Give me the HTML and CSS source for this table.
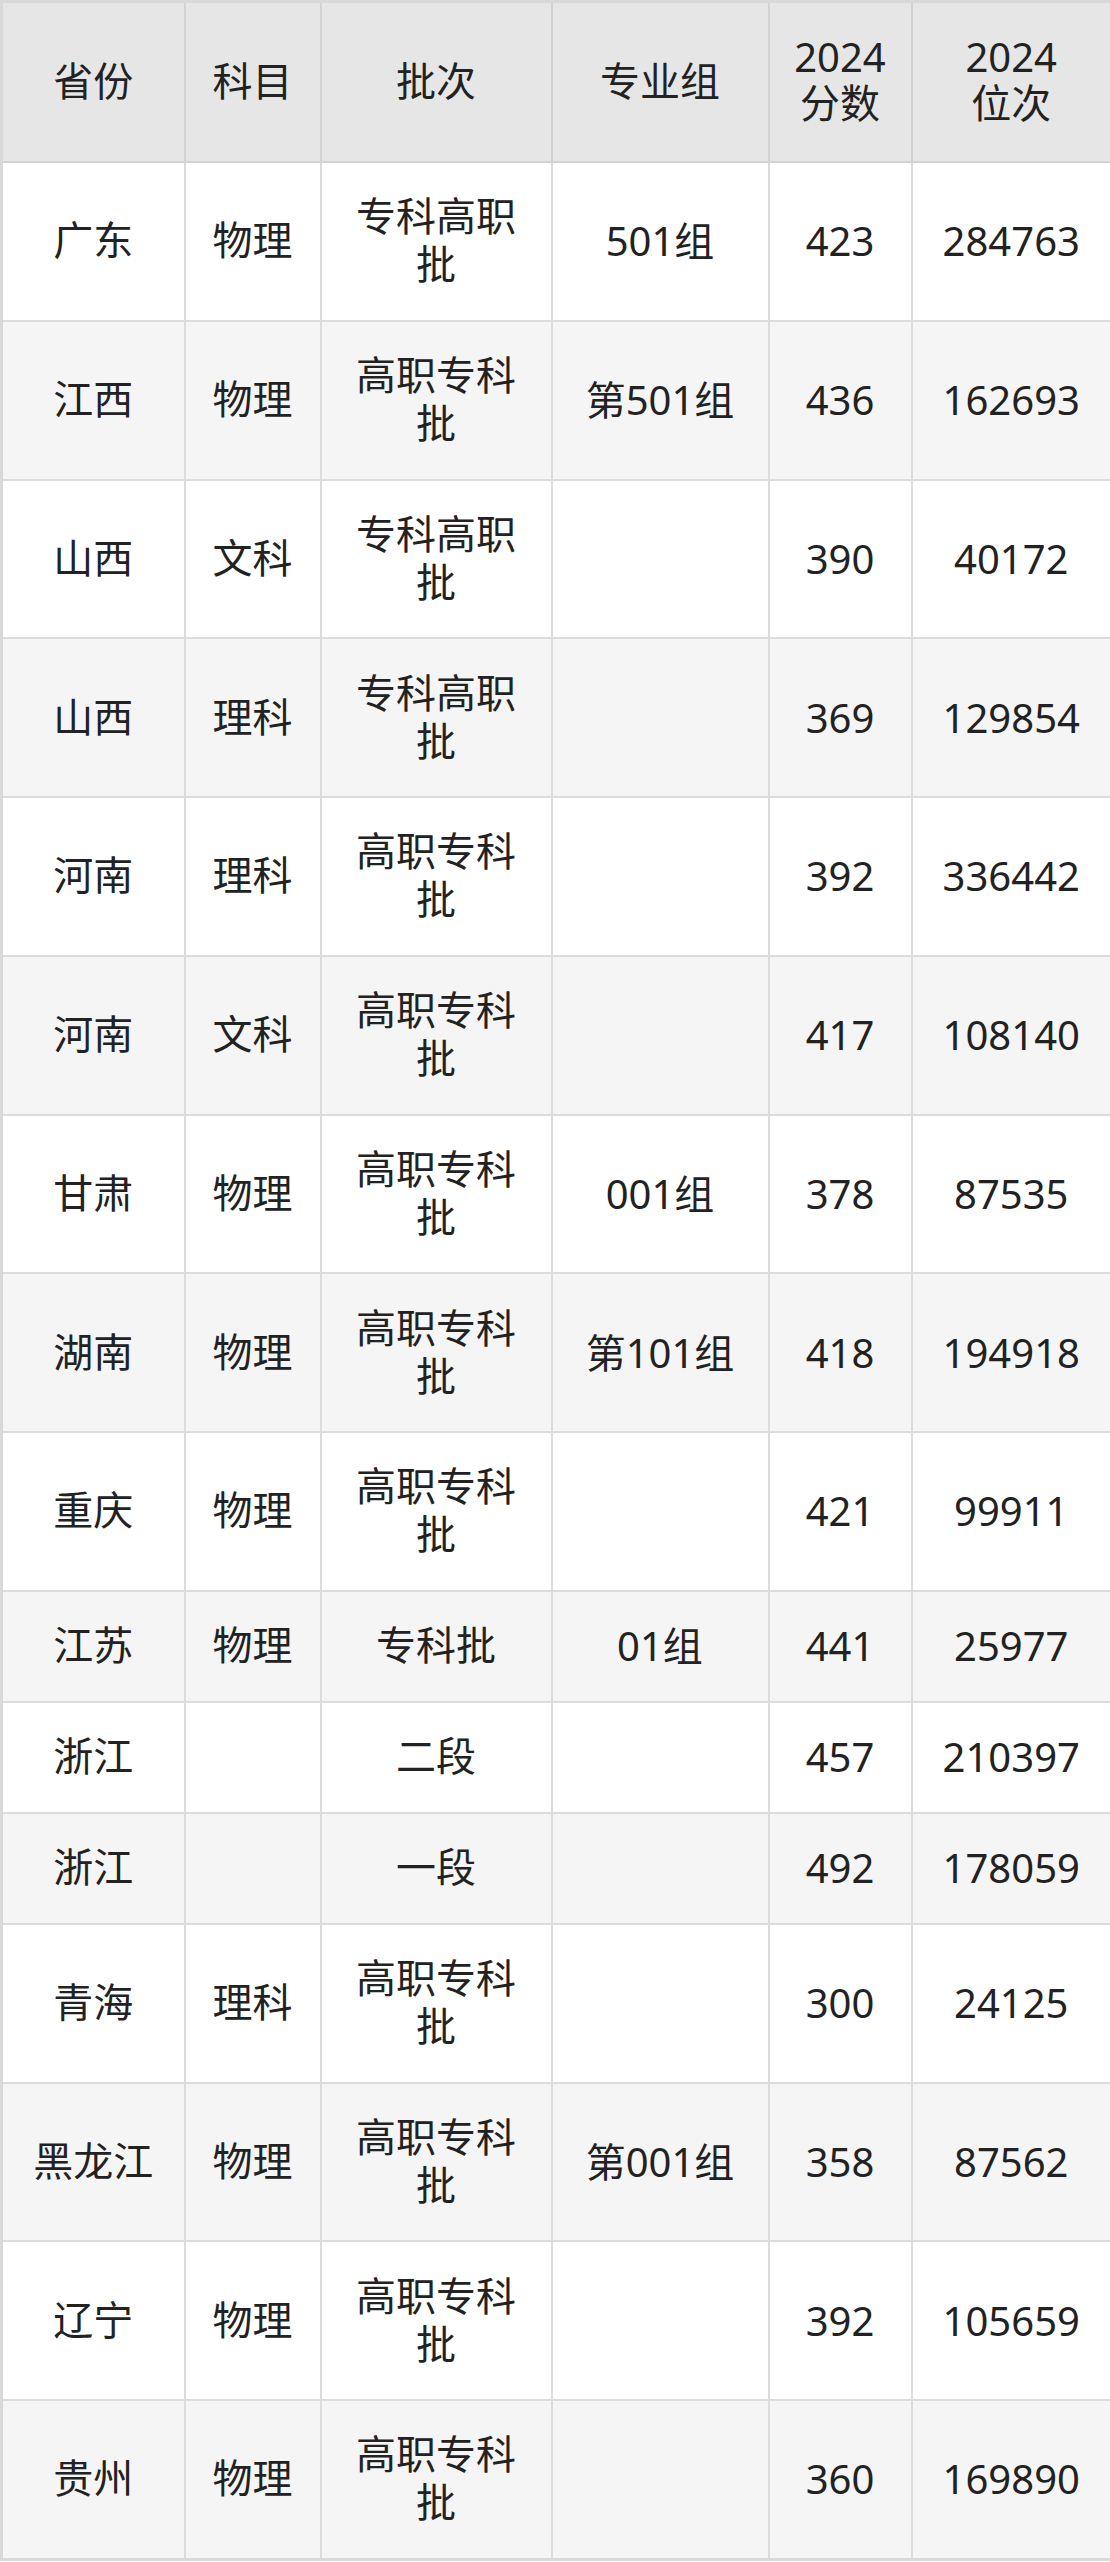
FILE: index.html
```html
<!DOCTYPE html>
<html lang="zh-CN">
<head>
<meta charset="utf-8">
<title>2024 分数位次</title>
<link rel="stylesheet" href="styles.css">
</head>
<body>
<table class="score-table">
  <colgroup>
    <col class="c-prov"><col class="c-subj"><col class="c-batch"><col class="c-group"><col class="c-score"><col class="c-rank">
  </colgroup>
  <thead>
    <tr class="head-row">
      <th class="cjk">省份</th><th class="cjk">科目</th><th class="cjk">批次</th><th class="cjk">专业组</th>
      <th><span class="line num">2024</span><span class="line cjk">分数</span></th>
      <th><span class="line num">2024</span><span class="line cjk">位次</span></th>
    </tr>
  </thead>
  <tbody>
    <tr class="tall"><td class="cjk">广东</td><td class="cjk">物理</td><td class="cjk">专科高职<br>批</td><td>501组</td><td>423</td><td>284763</td></tr>
    <tr class="tall alt"><td class="cjk">江西</td><td class="cjk">物理</td><td class="cjk">高职专科<br>批</td><td>第501组</td><td>436</td><td>162693</td></tr>
    <tr class="tall"><td class="cjk">山西</td><td class="cjk">文科</td><td class="cjk">专科高职<br>批</td><td></td><td>390</td><td>40172</td></tr>
    <tr class="tall alt"><td class="cjk">山西</td><td class="cjk">理科</td><td class="cjk">专科高职<br>批</td><td></td><td>369</td><td>129854</td></tr>
    <tr class="tall"><td class="cjk">河南</td><td class="cjk">理科</td><td class="cjk">高职专科<br>批</td><td></td><td>392</td><td>336442</td></tr>
    <tr class="tall alt"><td class="cjk">河南</td><td class="cjk">文科</td><td class="cjk">高职专科<br>批</td><td></td><td>417</td><td>108140</td></tr>
    <tr class="tall"><td class="cjk">甘肃</td><td class="cjk">物理</td><td class="cjk">高职专科<br>批</td><td>001组</td><td>378</td><td>87535</td></tr>
    <tr class="tall alt"><td class="cjk">湖南</td><td class="cjk">物理</td><td class="cjk">高职专科<br>批</td><td>第101组</td><td>418</td><td>194918</td></tr>
    <tr class="tall"><td class="cjk">重庆</td><td class="cjk">物理</td><td class="cjk">高职专科<br>批</td><td></td><td>421</td><td>99911</td></tr>
    <tr class="short alt"><td class="cjk">江苏</td><td class="cjk">物理</td><td class="cjk">专科批</td><td>01组</td><td>441</td><td>25977</td></tr>
    <tr class="short"><td class="cjk">浙江</td><td></td><td class="cjk">二段</td><td></td><td>457</td><td>210397</td></tr>
    <tr class="short alt"><td class="cjk">浙江</td><td></td><td class="cjk">一段</td><td></td><td>492</td><td>178059</td></tr>
    <tr class="tall"><td class="cjk">青海</td><td class="cjk">理科</td><td class="cjk">高职专科<br>批</td><td></td><td>300</td><td>24125</td></tr>
    <tr class="tall alt"><td class="cjk">黑龙江</td><td class="cjk">物理</td><td class="cjk">高职专科<br>批</td><td>第001组</td><td>358</td><td>87562</td></tr>
    <tr class="tall"><td class="cjk">辽宁</td><td class="cjk">物理</td><td class="cjk">高职专科<br>批</td><td></td><td>392</td><td>105659</td></tr>
    <tr class="tall alt"><td class="cjk">贵州</td><td class="cjk">物理</td><td class="cjk">高职专科<br>批</td><td></td><td>360</td><td>169890</td></tr>
  </tbody>
</table>
</body>
</html>
```

FILE: styles.css
```css
html, body {
  margin: 0;
  padding: 0;
  background: #ffffff;
}

body {
  font-family: "Noto Sans", "Noto Sans CJK SC", sans-serif;
  color: #222222;
}

.score-table {
  width: 1110px;
  table-layout: fixed;
  border-collapse: collapse;
  border: 3px solid #d9d9d9;
  font-size: 40px;
  line-height: 48px;
}

.c-prov { width: 183px; }
.c-subj { width: 136px; }
.c-batch { width: 231px; }
.c-group { width: 217px; }
.c-score { width: 143px; }
.c-rank { width: 200px; }

.score-table th,
.score-table td {
  border: 2px solid #dcdcdc;
  text-align: center;
  vertical-align: middle;
  padding: 0;
  font-weight: 400;
}

.cjk {
  font-family: "Liberation Sans", "Noto Sans CJK SC", sans-serif;
}

.num {
  font-family: "Noto Sans", "Noto Sans CJK SC", sans-serif;
  line-height: 44px;
}

.line {
  display: block;
}

.line.cjk {
  line-height: 50px;
}

.head-row th {
  background: #e6e6e6;
  border-color: #d2d2d2;
  height: 158px;
}

.tall td {
  height: 156.75px;
}

.short td {
  height: 109px;
}

.alt td {
  background: #f5f5f5;
}
```
